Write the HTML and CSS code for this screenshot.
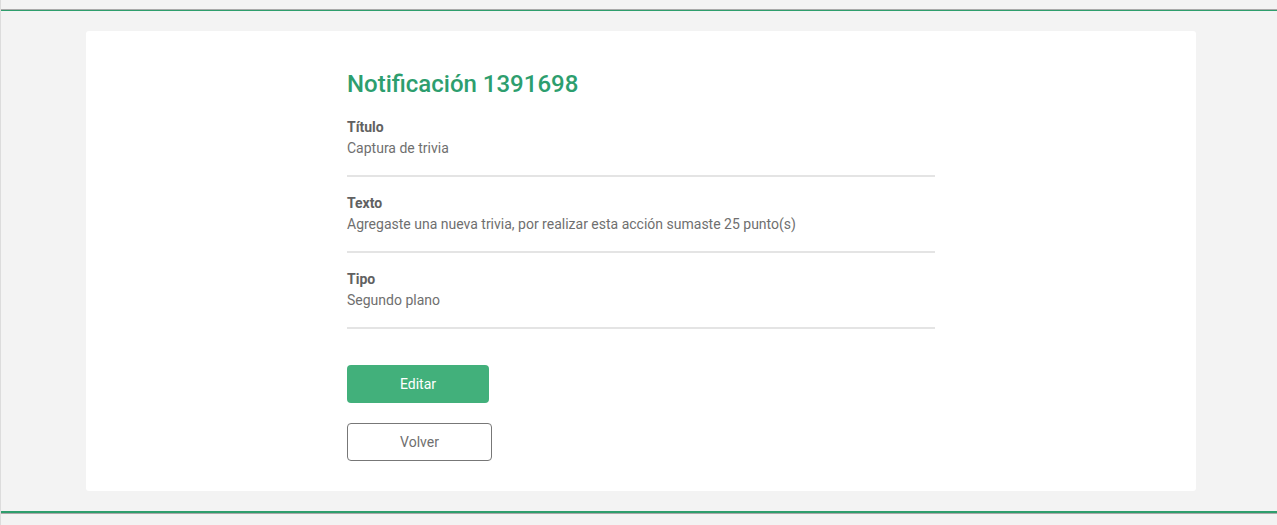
FILE: index.html
```html
<!DOCTYPE html>
<html lang="es">
<head>
<meta charset="utf-8">
<title>Notificación 1391698</title>
<link rel="stylesheet" href="styles.css">
</head>
<body>
<div class="topbar"></div>
<main class="main">
  <section class="card">
    <div class="content">
      <h1 class="title">Notificación 1391698</h1>
      <div class="field">
        <div class="label">Título</div>
        <div class="value">Captura de trivia</div>
      </div>
      <div class="field">
        <div class="label">Texto</div>
        <div class="value">Agregaste una nueva trivia, por realizar esta acción sumaste 25 punto(s)</div>
      </div>
      <div class="field">
        <div class="label">Tipo</div>
        <div class="value">Segundo plano</div>
      </div>
      <div class="actions">
        <a class="btn btn-primary" href="#">Editar</a>
        <a class="btn btn-outline" href="#">Volver</a>
      </div>
    </div>
  </section>
</main>
<div class="footer"></div>
</body>
</html>
```
FILE: styles.css
```css
html, body {
  margin: 0;
  padding: 0;
}
body {
  background: #f3f3f3;
  border-left: 1px solid #dcdcdc;
  font-family: Roboto, "Liberation Sans", sans-serif;
  color: #666;
  min-height: 525px;
  box-sizing: border-box;
}
.topbar {
  height: 9px;
  border-bottom: 1px solid #a9a9a9;
}
.main {
  border-top: 1px solid #2e9e6d;
  padding: 20px 81px 20px 85px;
}
.card {
  background: #fff;
  border-radius: 3px;
  padding: 39px 0 30px;
  display: flex;
  justify-content: center;
}
.content {
  width: 588px;
}
.title {
  margin: 0 0 2px;
  font-size: 24px;
  line-height: 29px;
  font-weight: 500;
  color: #2d9e6e;
}
.field {
  padding: 16px 0 17px;
  border-bottom: 2px solid #e4e4e4;
  font-size: 14px;
  line-height: 20px;
}
.label {
  font-weight: 700;
  color: #616161;
}
.value {
  padding-top: 1px;
  color: #6f6f6f;
}
.actions {
  padding-top: 36px;
  display: flex;
  flex-direction: column;
  align-items: flex-start;
  gap: 20px;
}
.btn {
  display: flex;
  align-items: center;
  justify-content: center;
  height: 38px;
  box-sizing: border-box;
  border-radius: 4px;
  font-size: 14px;
  text-decoration: none;
}
.btn-primary {
  width: 142px;
  background: #42b07b;
  color: #fff;
}
.btn-outline {
  width: 145px;
  border: 1px solid #777;
  color: #6f6f6f;
  background: #fff;
}
.footer {
  height: 0;
  border-top: 2px solid #2e9e6d;
  border-bottom: 1px solid #a9a9a9;
}
```
